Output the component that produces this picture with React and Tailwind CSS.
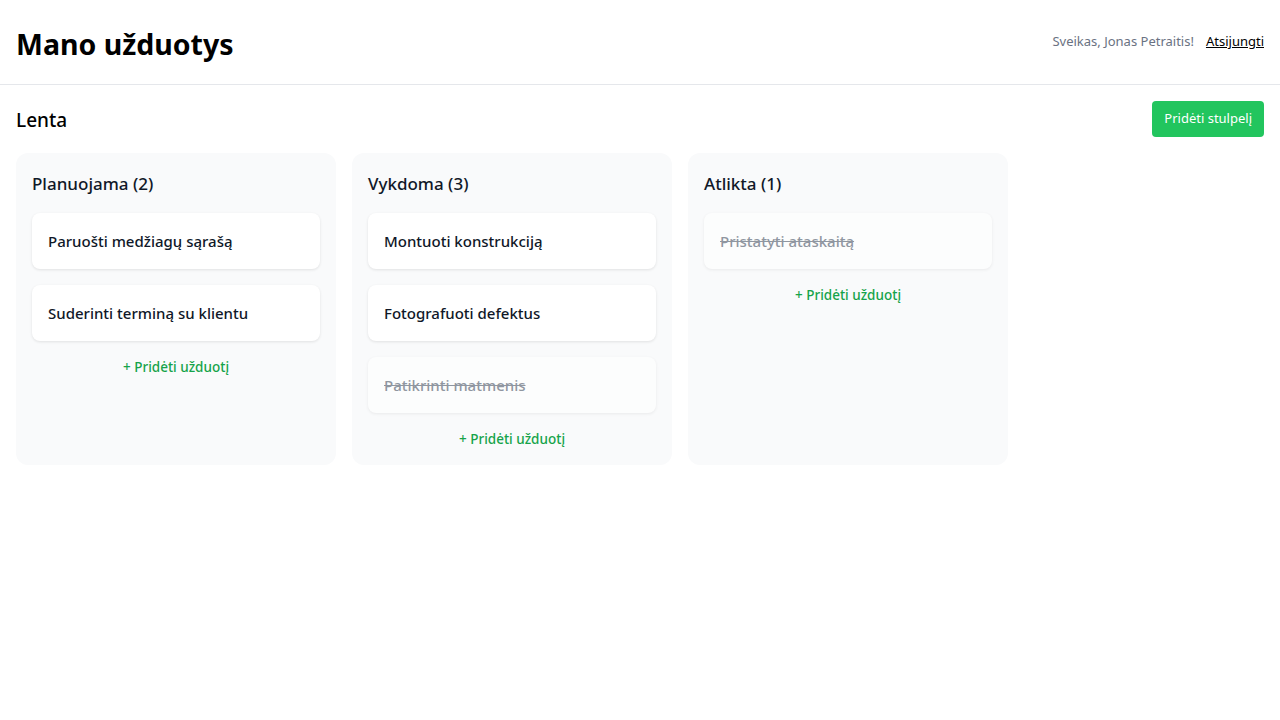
import { useState } from 'react';

const initialColumns = [
  {
    id: 1,
    title: 'Planuojama',
    tasks: [
      { id: 1, title: 'Paruošti medžiagų sąrašą', done: false },
      { id: 2, title: 'Suderinti terminą su klientu', done: false },
    ],
  },
  {
    id: 2,
    title: 'Vykdoma',
    tasks: [
      { id: 3, title: 'Montuoti konstrukciją', done: false },
      { id: 4, title: 'Fotografuoti defektus', done: false },
      { id: 5, title: 'Patikrinti matmenis', done: true },
    ],
  },
  {
    id: 3,
    title: 'Atlikta',
    tasks: [{ id: 6, title: 'Pristatyti ataskaitą', done: true }],
  },
];

const TaskCard = ({ task }) => (
  <div
    className={`rounded-lg bg-white px-4 h-14 flex items-center shadow-[0_1px_3px_rgba(0,0,0,0.1)] ${
      task.done ? 'opacity-60' : ''
    }`}
  >
    <span
      className={`text-[15px] font-medium ${
        task.done ? 'line-through text-gray-600' : 'text-gray-900'
      }`}
    >
      {task.title}
    </span>
  </div>
);

const Column = ({ column }) => (
  <div className="w-80 rounded-xl bg-gray-50 p-4 flex flex-col gap-4">
    <h2 className="text-[17px] font-medium leading-7 pt-px h-7 text-gray-900">
      {column.title} ({column.tasks.length})
    </h2>
    {column.tasks.map((task) => (
      <TaskCard key={task.id} task={task} />
    ))}
    <button className="text-[13.5px] font-medium leading-5 text-[#16a34a] hover:text-green-700">
      + Pridėti užduotį
    </button>
  </div>
);

export default function App() {
  const [columns] = useState(initialColumns);

  return (
    <div className="min-h-screen bg-white text-black font-['Noto_Sans',sans-serif]">
      <header className="h-[85px] px-4 flex items-center justify-between border-b border-gray-200">
        <h1 className="text-[28.5px] font-bold leading-none mt-1">Mano užduotys</h1>
        <div className="flex items-center gap-3 text-[13px]">
          <span className="text-gray-500">Sveikas, Jonas Petraitis!</span>
          <a href="#" className="underline text-black">
            Atsijungti
          </a>
        </div>
      </header>

      <main className="p-4">
        <div className="flex items-center justify-between mb-4">
          <h2 className="text-[19px] font-medium pt-0.5">Lenta</h2>
          <button className="h-9 px-3 rounded bg-[#22c55e] text-white text-[13px] hover:bg-green-600">
            Pridėti stulpelį
          </button>
        </div>

        <div className="flex items-stretch gap-4">
          {columns.map((column) => (
            <Column key={column.id} column={column} />
          ))}
        </div>
      </main>
    </div>
  );
}
